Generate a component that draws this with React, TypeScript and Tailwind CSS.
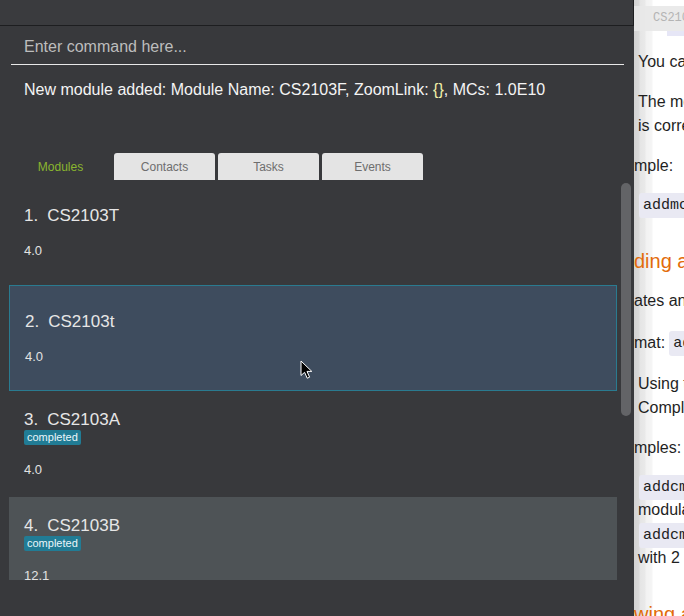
import React from "react";

const F = "font-['Liberation_Sans',Arial,sans-serif]";

function Item({
  idx,
  name,
  mc,
  done,
  variant,
  h,
  cursor,
}: {
  idx: number;
  name: string;
  mc: string;
  done?: boolean;
  variant: "plain" | "alt" | "sel";
  h: string;
  cursor?: boolean;
}) {
  const bg =
    variant === "sel"
      ? "bg-[#3e4c5e] border border-[#2a7b90] pl-[15px]"
      : variant === "alt"
      ? "bg-[#4e5356] pl-[15px]"
      : "pl-[15px]";
  return (
    <div className={`relative shrink-0 flex flex-col justify-center ${h} ${bg}`}>
      <div className="flex items-center gap-[9px] text-[17px] leading-[20px] text-[#e6e6e6]">
        <span>{idx}.</span>
        <span>{name}</span>
      </div>
      {done && (
        <div className="flex">
          <span className="h-[15px] px-[3px] rounded-[2px] bg-[#217c95] text-[11px] leading-[15px] text-[#eaf6fa]">
            completed
          </span>
        </div>
      )}
      <div className="mt-[17px] text-[13px] leading-[16px] text-[#e2e2e2]">{mc}</div>
      {cursor && (
        <svg
          className="absolute left-[290px] top-[74px]"
          width="14"
          height="20"
          viewBox="0 0 14 20"
        >
          <path
            d="M1 1 L1 15.5 L4.6 12.3 L7.2 18.2 L9.6 17.2 L7 11.4 L11.8 11.4 Z"
            fill="#000"
            stroke="#fff"
            strokeWidth="1"
            strokeLinejoin="round"
          />
        </svg>
      )}
    </div>
  );
}

function Chip({ children }: { children: React.ReactNode }) {
  return (
    <span className="inline-block h-[25px] px-[4px] bg-[#e9e9f3] rounded-[3px] font-['Liberation_Mono',monospace] text-[15px] leading-[25px] text-[#222]">
      {children}
    </span>
  );
}

export default function App() {
  return (
    <div className={`flex w-[684px] h-[616px] overflow-hidden ${F}`}>
      {/* Left app */}
      <div className="w-[634px] h-full shrink-0 bg-[#38393c] flex flex-col">
        <div className="h-[26px] shrink-0 bg-[#3a3b3e] border-b border-r border-[#1d1e20]" />
        <div className="mx-[11px] w-[613px] h-[39px] shrink-0 border-b border-[#e8e8e8] flex items-center pt-[4px] pl-[13px] text-[16px] text-[#bdbdbd]">
          Enter command here...
        </div>
        <div className="mt-[15px] pl-[24px] h-[20px] text-[16px] leading-[20px] text-[#f4f4f4] whitespace-nowrap">
          New module added: Module Name: CS2103F, ZoomLink:{" "}
          <span className="text-[#f2f0a8]">{"{}"}</span>, MCs: 1.0E10
        </div>
        <div className="mt-[53px] pl-[10px] flex gap-[3px] h-[27px] shrink-0 text-[12px]">
          <div className="w-[101px] flex items-center justify-center text-[#8ab62e]">Modules</div>
          <div className="w-[101px] flex items-center justify-center bg-[#e4e4e4] rounded-t-[3px] text-[#6e6e6e]">
            Contacts
          </div>
          <div className="w-[101px] flex items-center justify-center bg-[#e4e4e4] rounded-t-[3px] text-[#6e6e6e]">
            Tasks
          </div>
          <div className="w-[101px] flex items-center justify-center bg-[#e4e4e4] rounded-t-[3px] text-[#6e6e6e]">
            Events
          </div>
        </div>
        <div className="flex h-[400px] shrink-0">
          <div className="ml-[9px] w-[608px] h-full overflow-hidden flex flex-col">
            <Item idx={1} name="CS2103T" mc="4.0" variant="plain" h="h-[105px]" />
            <Item idx={2} name="CS2103t" mc="4.0" variant="sel" h="h-[106px]" cursor />
            <Item idx={3} name="CS2103A" mc="4.0" done variant="plain" h="h-[106px]" />
            <Item idx={4} name="CS2103B" mc="12.1" done variant="alt" h="h-[106px]" />
          </div>
          <div className="ml-[4px] w-[10px]">
            <div className="mt-[3px] h-[233px] w-[10px] rounded-[5px] bg-[#636467]" />
          </div>
        </div>
      </div>

      {/* Right browser panel */}
      <div className="flex-1 h-full overflow-hidden bg-[linear-gradient(to_right,#d2d2d2_0px,#d9d9d9_5px,#e5e5e5_6px,#e9e9e9_11px,#f2f2f2_12px,#f5f5f5_18px,#ffffff_19px)] text-[16px] leading-[24px] text-[#1f1f1f] whitespace-nowrap">
        <div className="mt-[6px] h-[25px] bg-[#e8e8e8]/90 pl-[19px] font-['Liberation_Mono',monospace] text-[12px] leading-[25px] text-[#b4b4b4]">
          CS2103T
        </div>
        <div className="ml-[33px] h-[5px] bg-[#e6e6f6]" />
        <div className="mt-[14px] pl-[4px]">You can add a module</div>
        <div className="mt-[16px] pl-[4px]">The module name</div>
        <div className="pl-[4px]">is correct</div>
        <div className="mt-[16px]">mple:</div>
        <div className="mt-[14px] pl-[5px] h-[25px]">
          <Chip>addmod</Chip>
        </div>
        <div className="mt-[30px] text-[20px] leading-[28px] text-[#e36c0a]">ding a</div>
        <div className="mt-[14px]">ates and</div>
        <div className="mt-[17px] flex items-center">
          <span>mat:</span>
          <span className="ml-[4px]">
            <Chip>addcmd</Chip>
          </span>
        </div>
        <div className="mt-[16px] pl-[4px]">Using the</div>
        <div className="pl-[4px]">Complete</div>
        <div className="mt-[16px]">mples:</div>
        <div className="mt-[14px] pl-[5px] h-[24px]">
          <Chip>addcmd</Chip>
        </div>
        <div className="pl-[4px]">modular</div>
        <div className="pl-[5px] h-[24px]">
          <Chip>addcmd</Chip>
        </div>
        <div className="pl-[4px]">with 2</div>
        <div className="mt-[30px] text-[20px] leading-[28px] text-[#e36c0a]">wing a</div>
      </div>
    </div>
  );
}
